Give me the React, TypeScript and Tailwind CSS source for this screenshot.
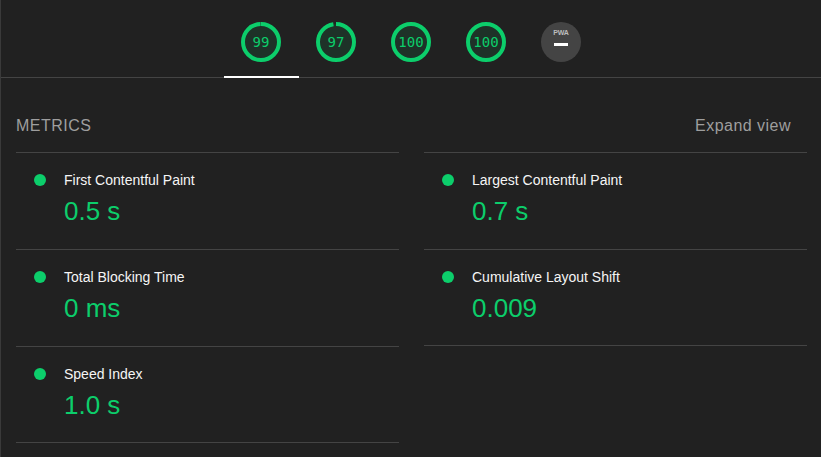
import React from "react";

const scores = [99, 97, 100, 100];

const left = [
  { label: "First Contentful Paint", value: "0.5 s" },
  { label: "Total Blocking Time", value: "0 ms" },
  { label: "Speed Index", value: "1.0 s" },
];

const right = [
  { label: "Largest Contentful Paint", value: "0.7 s" },
  { label: "Cumulative Layout Shift", value: "0.009" },
];

function Gauge({ score }: { score: number }) {
  const r = 18;
  const c = 2 * Math.PI * r;
  return (
    <div className="relative w-10 h-10">
      <svg width="40" height="40" viewBox="0 0 40 40" className="-rotate-90">
        <circle cx="20" cy="20" r={r} fill="rgba(12,206,107,0.1)" stroke="none" />
        <circle
          cx="20"
          cy="20"
          r={r}
          fill="none"
          stroke="#0cce6b"
          strokeWidth="4"
          strokeDasharray={`${(c * score) / 100} ${c}`}
        />
      </svg>
      <div className="absolute inset-0 flex items-center justify-center font-['DejaVu_Sans_Mono',monospace] text-[14px] text-[#0cce6b]">
        {score}
      </div>
    </div>
  );
}

function PwaGauge() {
  return (
    <div className="w-10 h-10 rounded-full bg-[#444444] flex flex-col items-center pt-[7px]">
      <span className="text-[7px] leading-[8px] font-bold text-[#bdbdbd] tracking-[-0.03em]">PWA</span>
      <span className="mt-[6px] block w-[14px] h-[3px] bg-white" />
    </div>
  );
}

function Metric({ label, value, last }: { label: string; value: string; last?: boolean }) {
  return (
    <div className={`h-[97px] border-t border-[#444444] ${last ? "border-b" : ""} pt-[17px] flex`}>
      <div className="w-[48px] pl-[18px] pt-[4px]">
        <span className="block w-3 h-3 rounded-full bg-[#0cce6b]" />
      </div>
      <div>
        <div className="text-[14px] leading-[20px] text-[#f5f5f5]">{label}</div>
        <div className="mt-[5px] text-[26px] leading-[32px] text-[#0cce6b]">{value}</div>
      </div>
    </div>
  );
}

export default function App() {
  return (
    <div className="w-[821px] h-[457px] overflow-hidden bg-[#212121] border-l border-[#3a3a3a] font-['Liberation_Sans',Arial,sans-serif]">
      {/* Score tabs */}
      <div className="h-[78px] border-b border-[#444444] flex justify-center">
        {scores.map((s, i) => (
          <div key={i} className="relative w-[75px] flex justify-center pt-[22px]">
            <Gauge score={s} />
            {i === 0 && <span className="absolute left-0 right-0 -bottom-px h-[2px] bg-white" />}
          </div>
        ))}
        <div className="w-[75px] flex justify-center pt-[22px]">
          <PwaGauge />
        </div>
      </div>

      <div className="pl-[15px] pr-[14px] pt-[36px]">
        <div className="flex items-center justify-between h-[24px] mb-[14px]">
          <span className="text-[16px] tracking-[0.03em] text-[#9e9e9e]">METRICS</span>
          <span className="text-[16px] tracking-[0.03em] text-[#9e9e9e] pr-[16px]">Expand view</span>
        </div>
        <div className="flex gap-[25px]">
          <div className="w-[383px] flex flex-col">
            {left.map((m, i) => (
              <Metric key={m.label} {...m} last={i === left.length - 1} />
            ))}
          </div>
          <div className="w-[383px] flex flex-col">
            {right.map((m, i) => (
              <Metric key={m.label} {...m} last={i === right.length - 1} />
            ))}
          </div>
        </div>
      </div>
    </div>
  );
}
